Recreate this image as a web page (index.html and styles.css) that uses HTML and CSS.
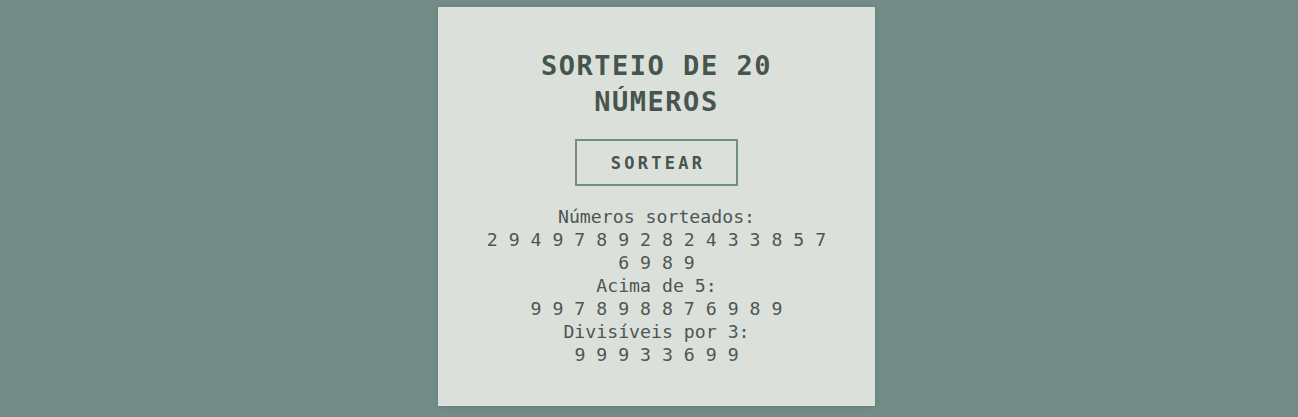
FILE: index.html
```html
<!DOCTYPE html>
<html lang="pt">
<head>
<meta charset="utf-8">
<title>Sorteio</title>
<link rel="stylesheet" href="styles.css">
</head>
<body>
<main class="card">
  <h1 class="title">SORTEIO DE 20 NÚMEROS</h1>
  <button class="btn">SORTEAR</button>
  <div class="result">
    <p>Números sorteados:</p>
    <p>2 9 4 9 7 8 9 2 8 2 4 3 3 8 5 7 6 9 8 9</p>
    <p>Acima de 5:</p>
    <p>9 9 7 8 9 8 8 7 6 9 8 9</p>
    <p>Divisíveis por 3:</p>
    <p>9 9 9 3 3 6 9 9</p>
  </div>
</main>
</body>
</html>
```
FILE: styles.css
```css
html, body {
  margin: 0;
  height: 100%;
}
body {
  background: #738c87;
  display: flex;
  justify-content: center;
  align-items: flex-start;
  padding: 7px 0 0 15px;
  box-sizing: border-box;
  font-family: "DejaVu Sans Mono", "Liberation Mono", monospace;
  overflow: hidden;
}
.card {
  width: 437px;
  height: 399px;
  box-sizing: border-box;
  background: #dce0db;
  padding: 41px 42px 40px;
  display: flex;
  flex-direction: column;
  align-items: center;
  text-align: center;
  box-shadow: 0 0 6px rgba(0, 0, 0, 0.12);
}
.title {
  margin: 0;
  font-size: 27px;
  line-height: 36px;
  font-weight: bold;
  letter-spacing: 1.5px;
  color: #46554d;
}
.btn {
  margin-top: 19px;
  width: 163px;
  height: 47px;
  background: transparent;
  border: 2px solid #738c87;
  font-family: inherit;
  font-size: 17px;
  font-weight: bold;
  letter-spacing: 3.3px;
  padding: 0 0 0 3px;
  color: #46554d;
  cursor: pointer;
}
.result {
  margin-top: 19px;
  color: #4e5652;
  font-size: 18.2px;
  line-height: 23px;
}
.result p {
  margin: 0;
}
```
